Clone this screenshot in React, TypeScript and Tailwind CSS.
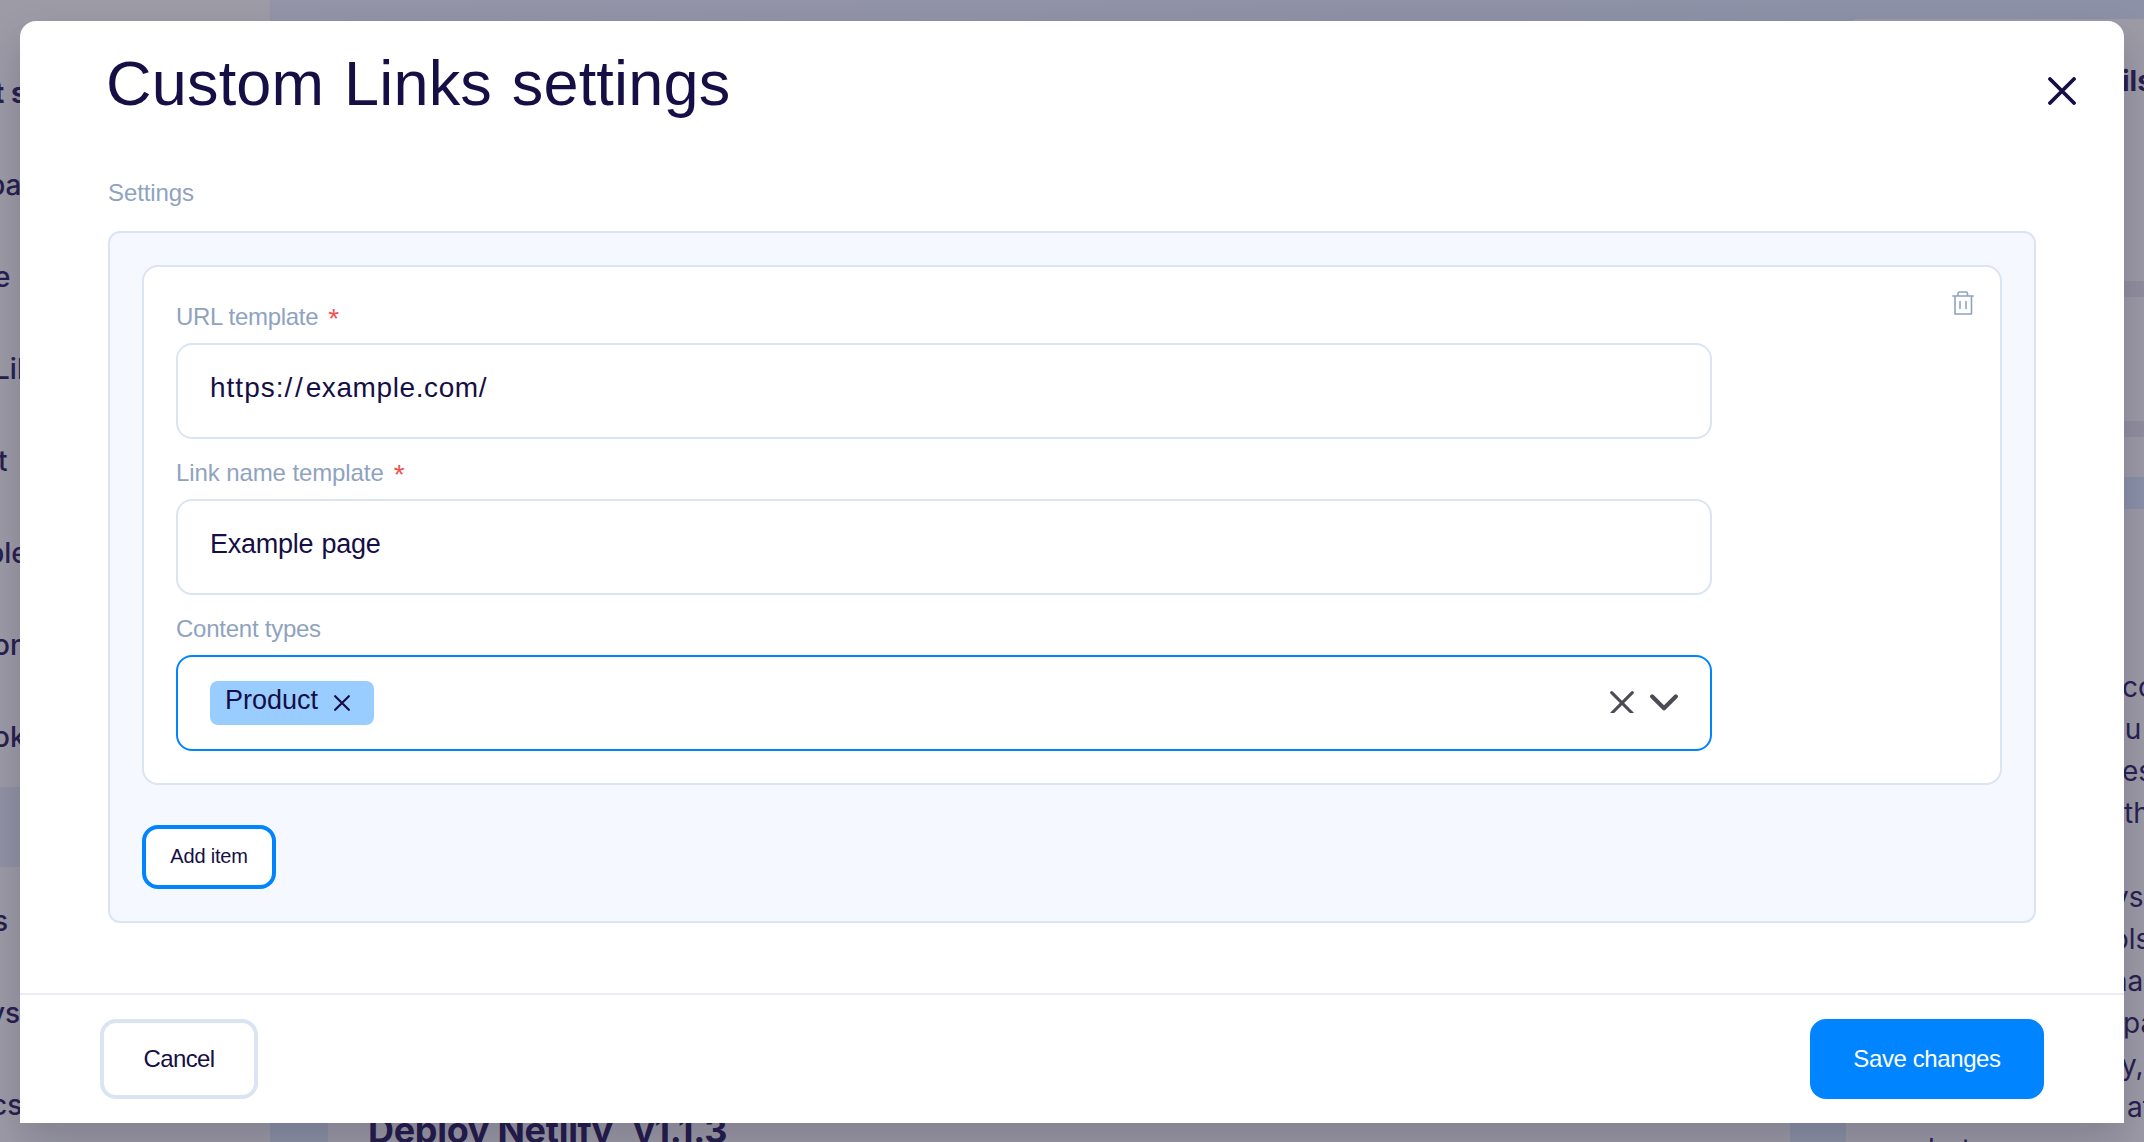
import type { ReactNode } from "react";

const sidebarItems = [
  { text: "t s", x: "ml-[-6px]", weight: "font-bold" },
  { text: "pa", x: "ml-[-12px]", weight: "font-medium" },
  { text: "e", x: "ml-[-6px]", weight: "font-medium" },
  { text: "Lib", x: "ml-[-6px]", weight: "font-medium" },
  { text: "t", x: "ml-[-2px]", weight: "font-medium" },
  { text: "ple", x: "ml-[-13px]", weight: "font-medium" },
  { text: "on", x: "ml-[-7px]", weight: "font-medium" },
  { text: "ok", x: "ml-[-7px]", weight: "font-medium" },
  { text: "", x: "", weight: "" },
  { text: "s", x: "ml-[-7px]", weight: "font-medium" },
  { text: "ys", x: "ml-[-11px]", weight: "font-medium" },
  { text: "cs", x: "ml-[-9px]", weight: "font-medium" },
];

const detailLines = [
  { text: "co", x: "pl-[276px]" },
  { text: "ou", x: "pl-[262px]" },
  { text: "es", x: "pl-[276px]" },
  { text: "th", x: "pl-[278px]" },
  { text: "", x: "" },
  { text: "ys,", x: "pl-[267px]" },
  { text: "ols", x: "pl-[266px]" },
  { text: "na", x: "pl-[265px]" },
  { text: "pa", x: "pl-[277px]" },
  { text: "y,", x: "pl-[275px]" },
  { text: "at", x: "pl-[281px]" },
];

function Cross({ className, width }: { className: string; width: number }) {
  return (
    <svg viewBox="0 0 28 28" className={className} fill="none" stroke="currentColor" strokeWidth={width} strokeLinecap="round">
      <path d="M2 2 26 26M26 2 2 26" />
    </svg>
  );
}

function Label({ children, required, tracking }: { children: ReactNode; required?: boolean; tracking: string }) {
  return (
    <div className="flex h-[60px] items-start pt-[18px] text-[24px] leading-[32px] text-[#8fa3bf]">
      <span className={tracking}>{children}</span>
      {required && <span className="ml-[10px] text-[28px] leading-[36px] text-[#ef5350]">*</span>}
    </div>
  );
}

function Backdrop() {
  return (
    <div className="flex h-full font-['Inter',sans-serif] text-[#28214f]">
      <aside className="w-[270px] shrink-0 overflow-hidden bg-[#9c9ba6] pt-[47px]">
        {sidebarItems.map((item, i) => (
          <div
            key={i}
            className={i === 8 ? "mt-[4px] mb-[8px] h-[80px] bg-[#9192a4]" : "flex h-[92px] items-center text-[28px]"}
          >
            <span className={`${item.x} ${item.weight} whitespace-nowrap`}>{item.text}</span>
          </div>
        ))}
      </aside>
      <div className="flex min-w-0 flex-1 flex-col bg-[linear-gradient(90deg,#9494a8,#8c91a7)]">
        <div className="h-[19px] shrink-0" />
        <div className="flex min-h-0 flex-1 bg-[linear-gradient(180deg,transparent,#8c92a4)] pl-[58px]">
          <main className="mt-[20px] flex w-[1462px] shrink-0 flex-col justify-end overflow-hidden bg-[#9c9ba6] pl-[40px]">
            <h2 className="h-[34px] text-[36px] leading-[44px] font-bold tracking-[-0.3px] whitespace-nowrap text-[#241d4c]">
              Deploy Netlify<span className="tracking-[3px]">_</span>v1.1.3
            </h2>
          </main>
          <section className="ml-[56px] flex w-[298px] shrink-0 flex-col overflow-hidden rounded-tl-[12px] bg-[#9c9ba6]">
            <div className="h-[262px] shrink-0 pt-[44px] pl-[276px] text-[28px] leading-[36px] font-bold">ils</div>
            <div className="h-[16px] shrink-0 bg-[#908f9f]" />
            <div className="h-[124px] shrink-0" />
            <div className="h-[16px] shrink-0 bg-[#908f9f]" />
            <div className="h-[40px] shrink-0" />
            <div className="h-[32px] shrink-0 bg-[#8a91a8]" />
            <div className="shrink-0 pt-[157px] text-[28px] leading-[42px]">
              {detailLines.map((line, i) => (
                <div key={i} className={`h-[42px] whitespace-nowrap ${line.x}`}>
                  {line.text}
                </div>
              ))}
              <div className="h-[42px] pl-[82px]">but</div>
            </div>
          </section>
        </div>
      </div>
    </div>
  );
}

export default function App() {
  return (
    <div className="relative h-screen w-full overflow-hidden">
      <Backdrop />
      <div
        role="dialog"
        className="absolute inset-x-[20px] top-[21px] flex h-[1102px] flex-col rounded-t-[16px] bg-white font-['Liberation_Sans',sans-serif] text-[#150f45] shadow-[0_20px_40px_rgba(20,10,50,0.18)]"
      >
        <header className="flex h-[144px] shrink-0 items-start justify-between pt-[20px] pr-[48px] pl-[86px]">
          <h1 className="text-[63px] leading-[85px] tracking-[0.2px] [word-spacing:2px]">Custom Links settings</h1>
          <Cross className="mt-[36px] h-[28px] w-[28px]" width={3.8} />
        </header>

        <div className="flex flex-1 flex-col px-[88px]">
          <div className="h-[66px] pt-[12px] text-[24px] leading-[32px] tracking-[-0.1px] text-[#8fa3bf]">Settings</div>
          <div className="h-[692px] rounded-[12px] border-2 border-[#dae4f3] bg-[#f5f8ff] p-[32px]">
            <div className="flex h-[520px] justify-between rounded-[16px] border-2 border-[#dae4f3] bg-white pt-[16px] pr-[26px] pl-[32px]">
              <div className="w-[1536px]">
                <Label required tracking="tracking-[-0.3px]">URL template</Label>
                <div className="flex h-[96px] items-start rounded-[16px] border-2 border-[#dae4f3] pt-[24px] pl-[32px] text-[28px] leading-[38px]">
                  <span className="tracking-[1px]">https:</span>
                  <span className="tracking-[2.8px]">//</span>
                  <span className="tracking-[0.6px]">example.com/</span>
                </div>
                <Label required tracking="tracking-[-0.1px]">Link name template</Label>
                <div className="flex h-[96px] items-start rounded-[16px] border-2 border-[#dae4f3] pt-[24px] pl-[32px] text-[27px] leading-[38px] tracking-[-0.25px] [word-spacing:1px]">
                  Example page
                </div>
                <Label tracking="tracking-[-0.25px]">Content types</Label>
                <div className="flex h-[96px] items-center justify-between rounded-[16px] border-2 border-[#0084ff] px-[32px]">
                  <div className="flex h-[44px] w-[164px] items-start rounded-[8px] bg-[#99ccff] pl-[15px]">
                    <span className="w-[109px] text-[27px] leading-[38px]">Product</span>
                    <Cross className="mt-[14px] h-[16px] w-[16px]" width={3.8} />
                  </div>
                  <div className="flex items-center gap-[16px] pb-[2px] text-[#4d4c55]">
                    <div className="h-[22px] w-[24px] overflow-hidden">
                      <Cross className="h-[24px] w-[24px]" width={3.6} />
                    </div>
                    <svg viewBox="0 0 28 18" className="h-[18px] w-[28px]" fill="none" stroke="currentColor" strokeWidth="4.2" strokeLinecap="round" strokeLinejoin="round">
                      <path d="M2.2 3.500 14 15.300 25.800 3.500" />
                    </svg>
                  </div>
                </div>
              </div>
              <svg viewBox="0 0 22 24" className="mt-[8px] h-[24px] w-[22px]" fill="none" stroke="#8fa3bf" strokeWidth="1.6" strokeLinecap="round" strokeLinejoin="round">
                <path d="M.8 5h20.4M3 5v18h16.500V5M6 5V2.500Q6 1 7.500 1h6.500q1.500 0 1.500 1.500V5M8 10.500v7M14 10.500v7" />
              </svg>
            </div>
            <button className="mt-[40px] flex h-[64px] w-[134px] justify-center rounded-[16px] border-4 border-[#0084ff] bg-white pt-[14px] text-[20px] leading-[27px] tracking-[-0.2px]">
              Add item
            </button>
          </div>
        </div>

        <footer className="flex h-[130px] shrink-0 items-start justify-between border-t-2 border-[#ebecf3] px-[80px] pt-[24px]">
          <button className="flex h-[80px] w-[158px] justify-center rounded-[16px] border-4 border-[#dae4f3] pt-[20px] text-[24px] leading-[32px] tracking-[-0.6px]">
            Cancel
          </button>
          <button className="flex h-[80px] w-[234px] justify-center rounded-[16px] bg-[#0084ff] pt-[24px] text-[24px] leading-[32px] tracking-[-0.4px] text-white">
            Save changes
          </button>
        </footer>
      </div>
    </div>
  );
}
